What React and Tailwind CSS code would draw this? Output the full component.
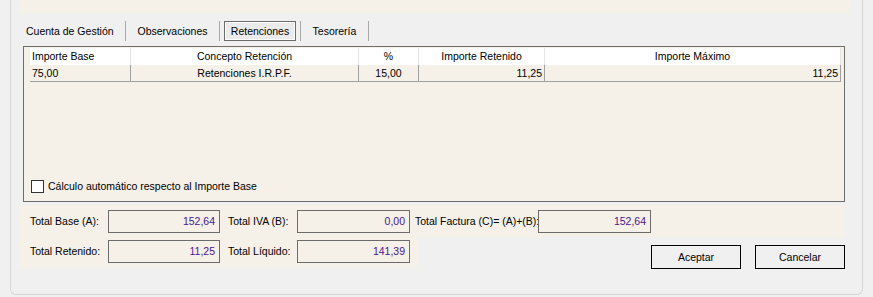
import React from "react";

const F = { fontFamily: '"Liberation Sans", Arial, sans-serif' };

function Box({ w, value }) {
  return (
    <div
      className={`shrink-0 h-[23px] border border-[#6b6b6b] bg-[#f5f1e8] flex items-center justify-end pr-[4px] text-[#4b1590] ${w}`}
    >
      {value}
    </div>
  );
}

export default function App() {
  return (
    <div className="w-[873px] h-[297px] bg-[#f0f0f0] pl-[10px] text-[10.5px] text-black leading-none overflow-hidden whitespace-nowrap" style={F}>
      <div className="w-[853px] h-[295px] border-l border-r border-b border-[#d6d6d6] rounded-b-[6px] flex flex-col">
        {/* top beige strip */}
        <div className="ml-[8px] w-[831px] h-[13px] bg-[#f5f1e8]" />

        {/* tabs */}
        <div className="mt-[8px] ml-[8px] h-[20px] flex items-stretch">
          <div className="w-[107px] pl-[7px] flex items-center border-r border-[#a8a8a8]">Cuenta de Gestión</div>
          <div className="w-[94px] flex items-center justify-center border-r border-[#a8a8a8]">Observaciones</div>
          <div className="w-[81px] flex items-stretch border-r border-[#a8a8a8] pl-[4px] pr-[4px]">
            <div className="w-[72px] border border-[#6b6b6b] bg-[#ebebeb] shadow-[inset_1px_1px_0_#ffffff,inset_-1px_-1px_0_#ffffff] flex items-center justify-center">
              Retenciones
            </div>
          </div>
          <div className="w-[68px] flex items-center justify-center border-r border-[#a8a8a8]">Tesorería</div>
        </div>

        {/* group box with grid */}
        <div className="mt-[5px] ml-[12px] w-[822px] h-[156px] border border-[#6e6e6e] bg-[#f5f1e8] flex flex-col pt-[1px] pl-[6px]">
          <div className="w-[811px]">
            <div className="flex h-[17px] bg-white">
              <div className="w-[101px] border-r border-[#e4e4e4] flex items-center pl-[2px]">Importe Base</div>
              <div className="w-[228px] border-r border-[#e4e4e4] flex items-center justify-center">Concepto Retención</div>
              <div className="w-[60px] border-r border-[#e4e4e4] flex items-center justify-center">%</div>
              <div className="w-[126px] border-r border-[#e4e4e4] flex items-center justify-center">Importe Retenido</div>
              <div className="w-[296px] border-r border-[#e4e4e4] flex items-center justify-center">Importe Máximo</div>
            </div>
            <div className="flex h-[17px] border-b border-[#a0a0a0]">
              <div className="w-[101px] border-r border-[#a0a0a0] flex items-center pl-[2px]">75,00</div>
              <div className="w-[228px] border-r border-[#a0a0a0] flex items-center justify-center">Retenciones I.R.P.F.</div>
              <div className="w-[60px] border-r border-[#a0a0a0] flex items-center justify-center">15,00</div>
              <div className="w-[126px] border-r border-[#a0a0a0] flex items-center justify-end pr-[2px]">11,25</div>
              <div className="w-[296px] border-r border-[#a0a0a0] flex items-center justify-end pr-[2px]">11,25</div>
            </div>
          </div>
          <div className="flex-1" />
          <div className="flex items-center pl-[1px] pb-[8px]">
            <div className="w-[13px] h-[13px] border border-[#333333] bg-white" />
            <span className="ml-[4px]">Cálculo automático respecto al Importe Base</span>
          </div>
        </div>

        {/* totals row 1 */}
        <div className="mt-[3px] ml-[8px] w-[826px] h-[32px] bg-[#f5f1e8] flex items-center pl-[11px] pt-[1px]">
          <div className="w-[78px] shrink-0">Total Base (A):</div>
          <Box w="w-[112px]" value="152,64" />
          <div className="w-[69px] ml-[8px] shrink-0">Total IVA (B):</div>
          <Box w="w-[113px]" value="0,00" />
          <div className="w-[123px] ml-[5px] shrink-0">Total Factura (C)= (A)+(B):</div>
          <Box w="w-[113px]" value="152,64" />
        </div>

        {/* totals row 2 + buttons */}
        <div className="ml-[8px] flex">
          <div className="w-[399px] h-[31px] bg-[#f5f1e8] flex items-center pl-[11px] pb-[2px]">
            <div className="w-[78px] shrink-0">Total Retenido:</div>
            <Box w="w-[112px]" value="11,25" />
            <div className="w-[69px] ml-[8px] shrink-0">Total Líquido:</div>
            <Box w="w-[113px]" value="141,39" />
          </div>
          <div className="ml-[233px] mt-[8px] flex gap-[14px]">
            <div className="w-[90px] h-[24px] border border-black bg-[#f0f0f0] flex items-center justify-center">Aceptar</div>
            <div className="w-[90px] h-[24px] border border-black bg-[#f0f0f0] flex items-center justify-center">Cancelar</div>
          </div>
        </div>
      </div>
    </div>
  );
}
